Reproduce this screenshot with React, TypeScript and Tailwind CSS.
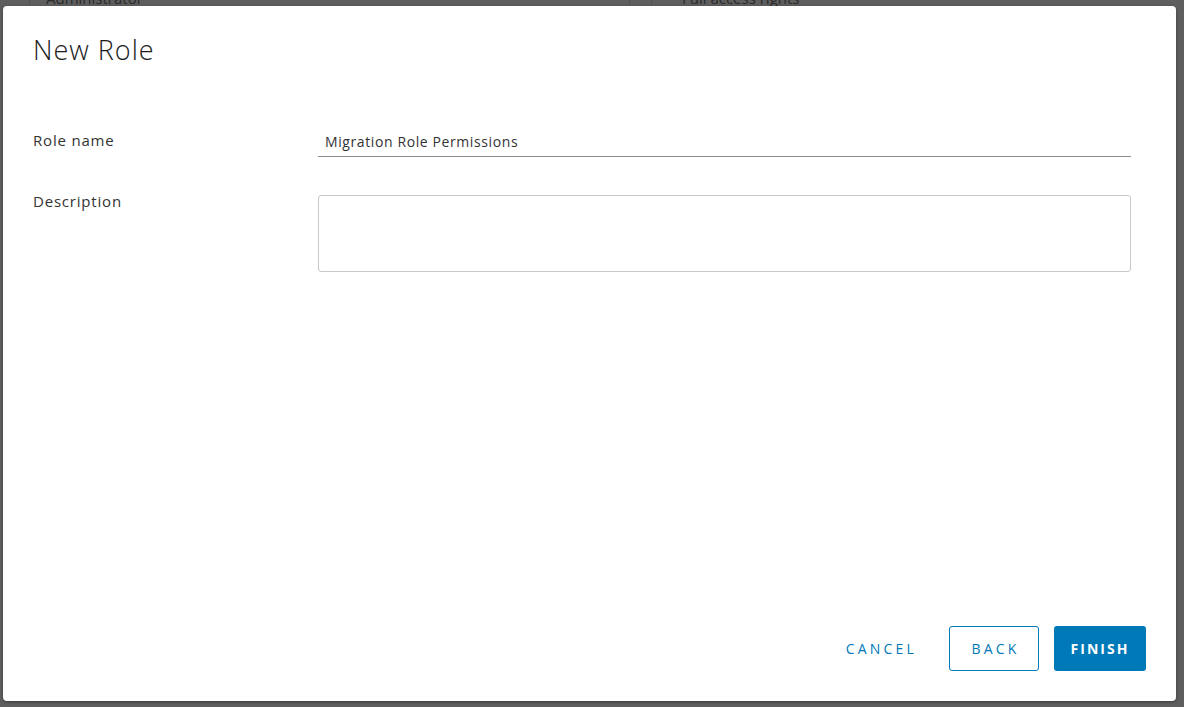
import React from "react";

export default function App() {
  const font = { fontFamily: "'Open Sans', 'Noto Sans', sans-serif" } as React.CSSProperties;
  return (
    <div className="relative h-[707px] w-full overflow-hidden bg-[#5e5e5e]" style={font}>
      {/* dimmed background page */}
      <div className="absolute left-0 top-[-13px] flex h-[18px] w-full text-[15px] text-[#2a2a2a]">
        <div className="w-[30px] border-r border-[#525252]" />
        <div className="w-[600px] border-r border-[#525252] pl-[16px]">Administrator</div>
        <div className="w-[22px] border-r border-[#525252]" />
        <div className="pl-[30px]">Full access rights</div>
      </div>

      <div className="relative ml-[3px] mt-[6px] flex h-[695px] w-[1173px] flex-col rounded-[4px] bg-white px-[30px] pb-[30px] pt-[28px] shadow-[0_1px_3px_rgba(0,0,0,0.4)]">
        <h1 className="text-[27px] font-light leading-[32px] tracking-[1px] text-[#1b1b1b]">New Role</h1>

        <div className="mt-[61px] grid grid-cols-[285px_1fr] gap-y-[38px] pr-[15px] text-[15px] text-[#333]">
          <div className="pt-[2px] tracking-[0.8px]">Role name</div>
          <div className="flex h-[30px] items-center border-b border-[#8c8c8c] pl-[7px] text-[14px] tracking-[0.6px] text-[#333]">
            Migration Role Permissions
          </div>
          <div className="mt-[-4px] leading-[20px] tracking-[0.8px]">Description</div>
          <div className="h-[77px] rounded-[3px] border border-[#c8c8c8]" />
        </div>

        <div className="mt-auto flex items-center justify-end">
          <button className="mr-[32px] text-[14px] tracking-[3.2px] text-[#0079b8]">CANCEL</button>
          <button className="mr-[15px] h-[45px] w-[90px] rounded-[3px] border border-[#0079b8] pl-[3px] text-[14px] tracking-[3.2px] text-[#0079b8]">
            BACK
          </button>
          <button className="h-[45px] w-[92px] rounded-[3px] bg-[#0079b8] text-[14px] font-bold tracking-[2px] text-white">
            FINISH
          </button>
        </div>
      </div>
    </div>
  );
}
